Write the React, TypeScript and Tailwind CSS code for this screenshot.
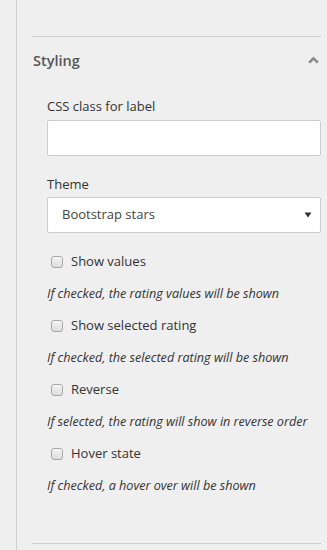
const OPTIONS = [
  { label: "Show values", help: "If checked, the rating values will be shown" },
  { label: "Show selected rating", help: "If checked, the selected rating will be shown" },
  { label: "Reverse", help: "If selected, the rating will show in reverse order" },
  { label: "Hover state", help: "If checked, a hover over will be shown" },
];

const App = () => {
  return (
    <div
      className="flex w-[327px] h-[550px] bg-[#efefef] text-[#333] overflow-hidden"
      style={{ fontFamily: '"Open Sans", "Liberation Sans", sans-serif' }}
    >
      <div className="w-[16px] shrink-0" />
      <div className="flex-1 border-l border-[#cfcfcf] pl-[15px] pr-[6px]">
        <div className="h-[36px]" />
        <div className="border-t border-[#cfcfcf]">
          <div className="flex items-center justify-between h-[47px]">
            <span className="text-[14.5px] font-semibold text-[#555] pl-[1px]">Styling</span>
            <svg width="11" height="8" viewBox="0 0 11 8" className="mr-[2px] mb-[1px]">
              <path d="M1.2 6.6 L5.5 2.3 L9.8 6.6" fill="none" stroke="#8a8a8a" strokeWidth="2.6" />
            </svg>
          </div>

          <div className="pl-[15px]">
            <div className="mt-[13px] text-[13px] leading-[18px]">CSS class for label</div>
            <input
              type="text"
              className="mt-[5px] block w-full h-[36px] bg-white border border-[#cccccc] rounded-[2px] outline-none px-[14px]"
            />

            <div className="mt-[19px] text-[13px] leading-[18px]">Theme</div>
            <div className="mt-[4px] flex items-center justify-between h-[36px] bg-white border border-[#cccccc] rounded-[2px] pl-[14px] pr-[8px]">
              <span className="text-[13px] text-[#444]">Bootstrap stars</span>
              <svg width="8" height="6" viewBox="0 0 8 6">
                <path d="M0.5 0.5 L7.5 0.5 L4 5.5 Z" fill="#333" />
              </svg>
            </div>

            <div className="pt-[20px] flex flex-col gap-[14px]">
              {OPTIONS.map((o) => (
                <div key={o.label} className="flex flex-col gap-[14px]">
                  <label className="flex items-center h-[18px] pl-[4px] gap-[8px] text-[13px]">
                    <span className="w-[12px] h-[12px] rounded-[3px] border border-[#a9a9a9] bg-gradient-to-b from-[#f6f6f6] to-[#dcdcdc]" />
                    <span>{o.label}</span>
                  </label>
                  <div className="h-[18px] leading-[18px] text-[12.6px] italic">{o.help}</div>
                </div>
              ))}
            </div>
          </div>
        </div>
        <div className="mt-[48px] border-t border-[#cfcfcf]" />
      </div>
    </div>
  );
};

export default App;
